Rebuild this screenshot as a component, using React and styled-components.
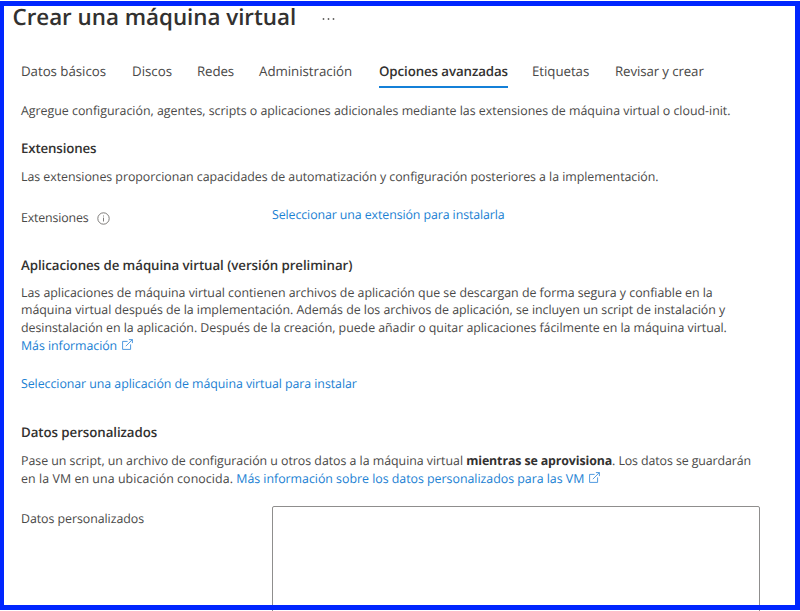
import React from "react";
import styled, { createGlobalStyle } from "styled-components";

const GlobalStyle = createGlobalStyle`
  * { box-sizing: border-box; }
  body {
    margin: 0;
    background: #fff;
    color: #4a4948;
    font-family: "Open Sans", "Noto Sans", sans-serif;
    font-size: 12.4px;
    text-rendering: geometricPrecision;
  }
`;

const Page = styled.div`
  width: 800px;
  height: 611px;
  padding-top: 1px;
  overflow: hidden;
`;

const Frame = styled.main`
  height: 609px;
  border: 5px solid #0026ff;
  border-left-width: 4px;
  padding-left: 17px;
  overflow: hidden;
`;

const Header = styled.header`
  display: flex;
  align-items: center;
  height: 22px;
  margin-left: -8.5px;
`;

const Title = styled.h1`
  margin: 0;
  width: 309px;
  font-size: 22.4px;
  line-height: 22px;
  font-weight: 600;
  letter-spacing: -0.03px;
  color: #323130;
  white-space: nowrap;
`;

const MoreIcon = styled.svg`
  width: 13px;
  height: 4px;
  margin-top: 3px;
  fill: #605e5c;
`;

const Tabs = styled.nav`
  display: grid;
  grid-template-columns: 111px 65px 62px 120px 153px 83px auto;
  justify-items: start;
  margin-top: 34px;
  height: 26px;
`;

const Tab = styled.a`
  height: 26px;
  font-size: 13.3px;
  line-height: 18px;
  white-space: nowrap;
  letter-spacing: ${(p) => p.$track || 0}px;
  font-weight: ${(p) => (p.$active ? 600 : 400)};
  color: ${(p) => (p.$active ? "#323130" : "#4a4948")};
  border-bottom: 2px solid ${(p) => (p.$active ? "#1480d8" : "transparent")};
`;

const Heading = styled.h2`
  margin: ${(p) => p.$top}px 0 0;
  font-size: 13.3px;
  line-height: 18px;
  font-weight: 600;
  letter-spacing: ${(p) => p.$track || 0}px;
  color: #323130;
  white-space: nowrap;
`;

const Paragraph = styled.p`
  margin: ${(p) => p.$top}px 0 0;
  line-height: 17.7px;
`;

const Line = styled.span`
  display: block;
  white-space: pre;
  letter-spacing: ${(p) => p.$track || 0}px;
`;

const Run = styled.span`
  letter-spacing: ${(p) => p.$track || 0}px;
`;

const Strong = styled.strong`
  font-weight: 700;
  letter-spacing: -0.12px;
  color: #323130;
`;

const Link = styled.a`
  color: #1b7fd3;
  line-height: 17.7px;
  white-space: nowrap;
  letter-spacing: ${(p) => p.$track || 0}px;
`;

const ActionRow = styled.div`
  margin-top: 21px;
  height: 18px;
  display: flex;
`;

const Field = styled.div`
  display: grid;
  grid-template-columns: 251px 488px;
  align-items: start;
  height: ${(p) => p.$height}px;
  margin-top: ${(p) => p.$top}px;
`;

const Label = styled.label`
  display: flex;
  align-items: center;
  gap: 8px;
  line-height: 18px;
  padding-top: ${(p) => p.$offset}px;
  letter-spacing: ${(p) => p.$track || 0}px;
`;

const InfoSvg = styled.svg`
  width: 13px;
  height: 13px;
`;

const ExternalSvg = styled.svg`
  width: 11px;
  height: 11px;
  margin-left: 5px;
  vertical-align: 0;
`;

const TextArea = styled.textarea`
  display: block;
  width: 488px;
  height: 160px;
  border: 1px solid #8f8e8d;
  border-radius: 2px;
  background: #fff;
  resize: none;
  outline: none;
`;

const BottomEdge = styled.div`
  width: 488px;
  height: 1px;
  margin-left: 272px;
  border: solid #8f8e8d;
  border-width: 0 1px;
`;

const InfoIcon = () => (
  <InfoSvg viewBox="0 0 13 13" fill="none" stroke="#706e6c">
    <circle cx="6.5" cy="6.5" r="5.7" strokeWidth="0.9" />
    <path d="M6.5 5.6v3.9M6.5 3.5v1" strokeWidth="0.9" />
  </InfoSvg>
);

const ExternalIcon = () => (
  <ExternalSvg viewBox="0 0 11 11" fill="none" stroke="#3d8fdb" strokeWidth="0.9">
    <path d="M5.6 2.4H.6v8H8.6V5.4M3.8 7.2l6.5-6.6M6.9.6h3.5v3.5" />
  </ExternalSvg>
);

const TABS = [
  { name: "Datos básicos", track: -0.04 },
  { name: "Discos" },
  { name: "Redes", track: -0.1 },
  { name: "Administración", track: -0.03 },
  { name: "Opciones avanzadas", track: -0.1, active: true },
  { name: "Etiquetas", track: -0.06 },
  { name: "Revisar y crear", track: -0.12 },
];

export default function App() {
  return (
    <Page>
      <GlobalStyle />
      <Frame>
        <Header>
          <Title>Crear una máquina virtual</Title>
          <MoreIcon viewBox="0 0 13 4">
            <circle cx="1.5" cy="2" r="0.9" />
            <circle cx="6.5" cy="2" r="0.9" />
            <circle cx="11.5" cy="2" r="0.9" />
          </MoreIcon>
        </Header>
        <Tabs>
          {TABS.map((t) => (
            <Tab key={t.name} $active={t.active} $track={t.track}>{t.name}</Tab>
          ))}
        </Tabs>
        <Paragraph $top={14}>
          <Line $track={-0.012}>Agregue configuración, agentes, scripts o aplicaciones adicionales mediante las extensiones de máquina virtual o cloud-init.</Line>
        </Paragraph>

        <Heading $top={19.3} $track={-0.15}>Extensiones</Heading>
        <Paragraph $top={11}>
          <Line $track={-0.045}>Las extensiones proporcionan capacidades de automatización y configuración posteriores a la implementación.</Line>
        </Paragraph>
        <Field $top={20.3} $height={20}>
          <Label $offset={3} $track={-0.16}>Extensiones <InfoIcon /></Label>
          <Link $track={-0.1}>Seleccionar una extensión para instalarla</Link>
        </Field>

        <Heading $top={29.5} $track={-0.065}>Aplicaciones de máquina virtual (versión preliminar)</Heading>
        <Paragraph $top={10}>
          <Line $track={-0.025}>Las aplicaciones de máquina virtual contienen archivos de aplicación que se descargan de forma segura y confiable en la</Line>
          <Line $track={-0.03}>máquina virtual después de la implementación. Además de los archivos de aplicación, se incluyen un script de instalación y</Line>
          <Line $track={-0.048}>desinstalación en la aplicación. Después de la creación, puede añadir o quitar aplicaciones fácilmente en la máquina virtual.</Line>
          <Line><Link $track={-0.06}>Más información<ExternalIcon /></Link></Line>
        </Paragraph>
        <ActionRow>
          <Link $track={-0.065}>Seleccionar una aplicación de máquina virtual para instalar</Link>
        </ActionRow>

        <Heading $top={30} $track={-0.07}>Datos personalizados</Heading>
        <Paragraph $top={11}>
          <Line>
            <Run $track={-0.035}>Pase un script, un archivo de configuración u otros datos a la máquina virtual </Run>
            <Strong>mientras se aprovisiona</Strong>
            <Run $track={-0.1}>. Los datos se guardarán</Run>
          </Line>
          <Line>
            <Run $track={0.07}>en la VM en una ubicación conocida. </Run>
            <Link $track={-0.025}>Más información sobre los datos personalizados para las VM<ExternalIcon /></Link>
          </Line>
        </Paragraph>
        <Field $top={18.5} $height={160}>
          <Label $offset={4} $track={-0.06} htmlFor="custom-data">Datos personalizados</Label>
          <TextArea id="custom-data" />
        </Field>
      </Frame>
      <BottomEdge />
    </Page>
  );
}
